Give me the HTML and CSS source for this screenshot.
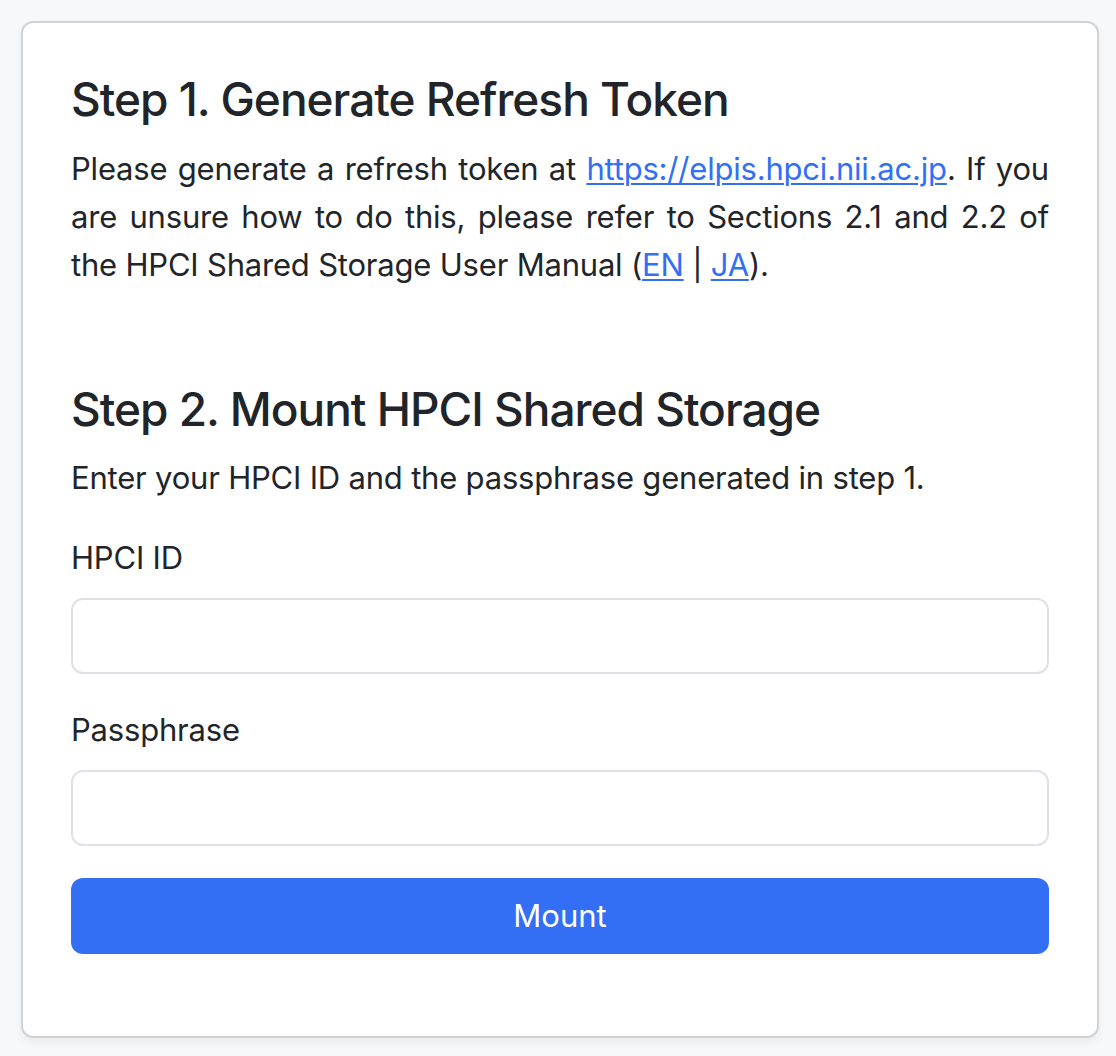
FILE: index.html
```html
<!DOCTYPE html>
<html lang="en">
<head>
<meta charset="utf-8">
<title>HPCI Shared Storage</title>
<link rel="stylesheet" href="styles.css">
</head>
<body>
<div class="page">
  <div class="card">
    <section class="step step-one">
      <h4 class="step-title">Step 1. Generate Refresh Token</h4>
      <p class="step-text">Please generate a refresh token at <a href="#">https://elpis.hpci.nii.ac.jp</a>. If you are unsure how to do this, please refer to Sections 2.1 and 2.2 of the HPCI Shared Storage User Manual (<a href="#">EN</a> | <a href="#">JA</a>).</p>
    </section>
    <section class="step step-two">
      <h4 class="step-title">Step 2. Mount HPCI Shared Storage</h4>
      <p class="step-text">Enter your HPCI ID and the passphrase generated in step 1.</p>
      <form class="mount-form">
        <div class="field">
          <label class="field-label" for="hpci-id">HPCI ID</label>
          <input class="field-input" id="hpci-id" type="text">
        </div>
        <div class="field">
          <label class="field-label" for="passphrase">Passphrase</label>
          <input class="field-input" id="passphrase" type="password">
        </div>
        <button class="btn-mount" type="button">Mount</button>
      </form>
    </section>
  </div>
</div>
</body>
</html>
```
FILE: styles.css
```css
* { box-sizing: border-box; }
html, body { margin: 0; padding: 0; }
body {
  background: #f7f8fa;
  font-family: Inter, "Noto Sans", "Liberation Sans", sans-serif;
  font-size: 31px;
  line-height: 48px;
  letter-spacing: -0.2px;
  color: #212529;
}
.page {
  padding: 21px 17px 21px 21px;
}
.card {
  background: #fff;
  border: 2px solid #d3d3d3;
  border-radius: 12px;
  box-shadow: 0 4px 8px rgba(0, 0, 0, 0.06);
  padding: 48px 48px 50px 48px;
}
.step-title {
  margin: 0 0 16px 0;
  font-size: 46px;
  font-weight: 500;
  line-height: 57.6px;
  letter-spacing: -1px;
}
.step-text {
  margin: 0 0 32px 0;
}
.step-one .step-text {
  text-align: justify;
}
.step-one {
  margin-bottom: 92px;
}
.step-text a {
  color: #326ff5;
  text-decoration: underline;
  text-underline-offset: 3px;
  text-decoration-thickness: 2px;
}
.mount-form {
  display: flex;
  flex-direction: column;
}
.field {
  display: flex;
  flex-direction: column;
  margin-bottom: 32px;
}
.field-label {
  margin-bottom: 16px;
}
.field-input {
  height: 76px;
  border: 2px solid #dee2e6;
  border-radius: 12px;
  padding: 12px 24px;
  font: inherit;
  background: #fff;
}
.btn-mount {
  height: 76px;
  border: none;
  border-radius: 12px;
  background: #326ff5;
  color: #fff;
  font: inherit;
  margin-bottom: 32px;
}
```
